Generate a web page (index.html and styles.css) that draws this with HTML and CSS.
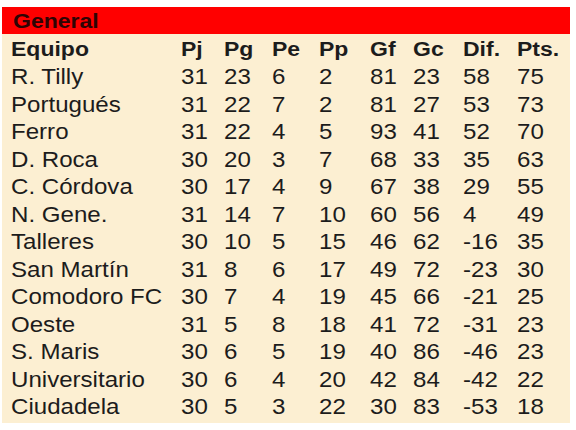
FILE: index.html
```html
<!DOCTYPE html>
<html>
<head>
<meta charset="utf-8">
<link rel="stylesheet" href="styles.css">
</head>
<body>
<div class="board">
  <div class="title"><span>General</span></div>
  <div class="table">
    <div class="row head"><span>Equipo</span><span>Pj</span><span>Pg</span><span>Pe</span><span>Pp</span><span>Gf</span><span>Gc</span><span>Dif.</span><span>Pts.</span></div>
    <div class="row"><span>R. Tilly</span><span>31</span><span>23</span><span>6</span><span>2</span><span>81</span><span>23</span><span>58</span><span>75</span></div>
    <div class="row"><span>Portugués</span><span>31</span><span>22</span><span>7</span><span>2</span><span>81</span><span>27</span><span>53</span><span>73</span></div>
    <div class="row"><span>Ferro</span><span>31</span><span>22</span><span>4</span><span>5</span><span>93</span><span>41</span><span>52</span><span>70</span></div>
    <div class="row"><span>D. Roca</span><span>30</span><span>20</span><span>3</span><span>7</span><span>68</span><span>33</span><span>35</span><span>63</span></div>
    <div class="row"><span>C. Córdova</span><span>30</span><span>17</span><span>4</span><span>9</span><span>67</span><span>38</span><span>29</span><span>55</span></div>
    <div class="row"><span>N. Gene.</span><span>31</span><span>14</span><span>7</span><span>10</span><span>60</span><span>56</span><span>4</span><span>49</span></div>
    <div class="row"><span>Talleres</span><span>30</span><span>10</span><span>5</span><span>15</span><span>46</span><span>62</span><span>-16</span><span>35</span></div>
    <div class="row"><span>San Martín</span><span>31</span><span>8</span><span>6</span><span>17</span><span>49</span><span>72</span><span>-23</span><span>30</span></div>
    <div class="row"><span>Comodoro FC</span><span>30</span><span>7</span><span>4</span><span>19</span><span>45</span><span>66</span><span>-21</span><span>25</span></div>
    <div class="row"><span>Oeste</span><span>31</span><span>5</span><span>8</span><span>18</span><span>41</span><span>72</span><span>-31</span><span>23</span></div>
    <div class="row"><span>S. Maris</span><span>30</span><span>6</span><span>5</span><span>19</span><span>40</span><span>86</span><span>-46</span><span>23</span></div>
    <div class="row"><span>Universitario</span><span>30</span><span>6</span><span>4</span><span>20</span><span>42</span><span>84</span><span>-42</span><span>22</span></div>
    <div class="row"><span>Ciudadela</span><span>30</span><span>5</span><span>3</span><span>22</span><span>30</span><span>83</span><span>-53</span><span>18</span></div>
  </div>
</div>
</body>
</html>
```
FILE: styles.css
```css
html, body {
  margin: 0;
  padding: 0;
  background: #ffffff;
}
body {
  font-family: "Liberation Sans", Arial, sans-serif;
  color: #1c1c1c;
}
.board {
  margin: 7px 0 0 2px;
  width: 568px;
}
.title {
  background: #ff0000;
  height: 27px;
  line-height: 28px;
  padding-left: 11px;
  font-size: 20px;
  font-weight: bold;
  color: #2e0404;
}
.title span {
  display: inline-block;
  transform: scaleX(1.15);
  transform-origin: left center;
}
.table {
  background: #fcefd2;
  padding: 0 0 2px 9px;
}
.row {
  display: grid;
  grid-template-columns: 170px 43px 48px 47px 51px 43px 50px 54px 1fr;
  height: 27.5px;
  line-height: 28px;
  font-size: 21.5px;
}
.row span {
  display: block;
  white-space: nowrap;
  transform: scaleX(1.12);
  transform-origin: left center;
}
.row.head {
  height: 29px;
  line-height: 30px;
  font-size: 20px;
  font-weight: bold;
}
.row.head span {
  transform: scaleX(1.15);
}
```
